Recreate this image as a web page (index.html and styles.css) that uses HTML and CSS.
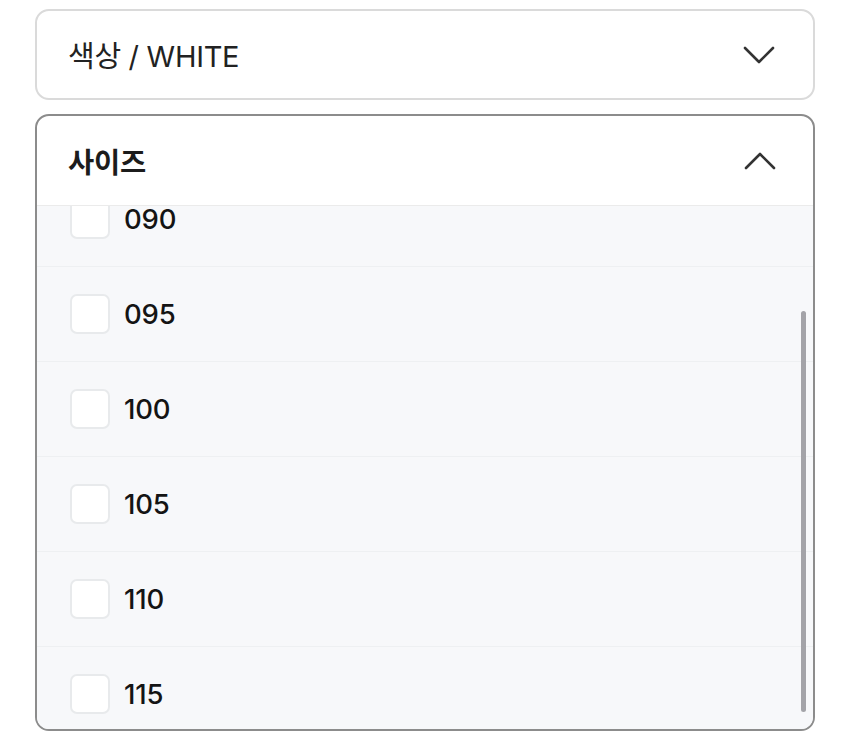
FILE: index.html
```html
<!DOCTYPE html>
<html lang="ko">
<head>
<meta charset="utf-8">
<title>옵션 선택</title>
<link rel="stylesheet" href="styles.css">
</head>
<body>
<div class="options">
  <div class="select">
    <span class="select-label">색상 / WHITE</span>
    <svg class="chevron" viewBox="0 0 32 18" width="32" height="18" aria-hidden="true">
      <polyline points="2,2 16,16 30,2" fill="none" stroke="#333" stroke-width="2.6" stroke-linecap="round" stroke-linejoin="round"/>
    </svg>
  </div>

  <div class="select select-open">
    <div class="select-head">
      <span class="select-title">사이즈</span>
      <svg class="chevron" viewBox="0 0 32 18" width="32" height="18" aria-hidden="true">
        <polyline points="2,16 16,2 30,16" fill="none" stroke="#333" stroke-width="2.6" stroke-linecap="round" stroke-linejoin="round"/>
      </svg>
    </div>
    <div class="list-wrap">
      <ul class="size-list" id="sizeList">
        <li class="size-row"><span class="check"></span><span class="size">090</span></li>
        <li class="size-row"><span class="check"></span><span class="size">095</span></li>
        <li class="size-row"><span class="check"></span><span class="size">100</span></li>
        <li class="size-row"><span class="check"></span><span class="size">105</span></li>
        <li class="size-row"><span class="check"></span><span class="size">110</span></li>
        <li class="size-row"><span class="check"></span><span class="size">115</span></li>
      </ul>
      <div class="scroll-thumb"></div>
    </div>
  </div>
</div>
<script>
  // list is scrolled a little past the top of the first row
  document.getElementById('sizeList').scrollTop = 34;
</script>
</body>
</html>
```

FILE: styles.css
```css
* {
  box-sizing: border-box;
}

html, body {
  margin: 0;
  padding: 0;
  background: #ffffff;
}

body {
  font-family: Inter, "Noto Sans CJK KR", "Noto Sans", sans-serif;
  color: #1f1f1f;
}

.options {
  width: 780px;
  margin-left: 35px;
  padding-top: 9px;
  display: flex;
  flex-direction: column;
  gap: 14px;
}

.select {
  height: 91px;
  border: 2px solid #dadada;
  border-radius: 14px;
  display: flex;
  align-items: center;
  justify-content: space-between;
  padding: 0 38px 0 31px;
  background: #fff;
}

.select-label {
  font-size: 29px;
  font-weight: 400;
  letter-spacing: -0.3px;
  color: #222;
  margin-top: -2px;
}

.chevron {
  display: block;
}

.select-open {
  height: 617px;
  border-color: #8c8c8c;
  flex-direction: column;
  align-items: stretch;
  padding: 0;
  overflow: hidden;
}

.select-head {
  height: 90px;
  flex: none;
  display: flex;
  align-items: center;
  justify-content: space-between;
  padding: 0 37px 0 31px;
  border-bottom: 1.5px solid #ebebeb;
}

.select-title {
  font-size: 28.5px;
  font-weight: 700;
  color: #1c1c1c;
  letter-spacing: -0.2px;
}

.list-wrap {
  position: relative;
  flex: 1;
  min-height: 0;
  background: #f7f8fa;
}

.size-list {
  list-style: none;
  margin: 0;
  padding: 0 0 40px;
  height: 100%;
  overflow: hidden;
}

.size-row {
  height: 95px;
  display: flex;
  align-items: center;
  gap: 14px;
  padding-left: 33px;
  border-bottom: 1px solid #eef0f2;
}

.check {
  width: 40px;
  height: 40px;
  flex: none;
  background: #fff;
  border: 2px solid #e8eaec;
  border-radius: 7px;
}

.size {
  font-size: 27.5px;
  font-weight: 500;
  color: #141414;
  letter-spacing: -0.2px;
}

/* overlay scrollbar thumb */
.scroll-thumb {
  position: absolute;
  right: 7px;
  top: 105px;
  width: 5px;
  height: 401px;
  border-radius: 3px;
  background: #a3a3a8;
}
```
